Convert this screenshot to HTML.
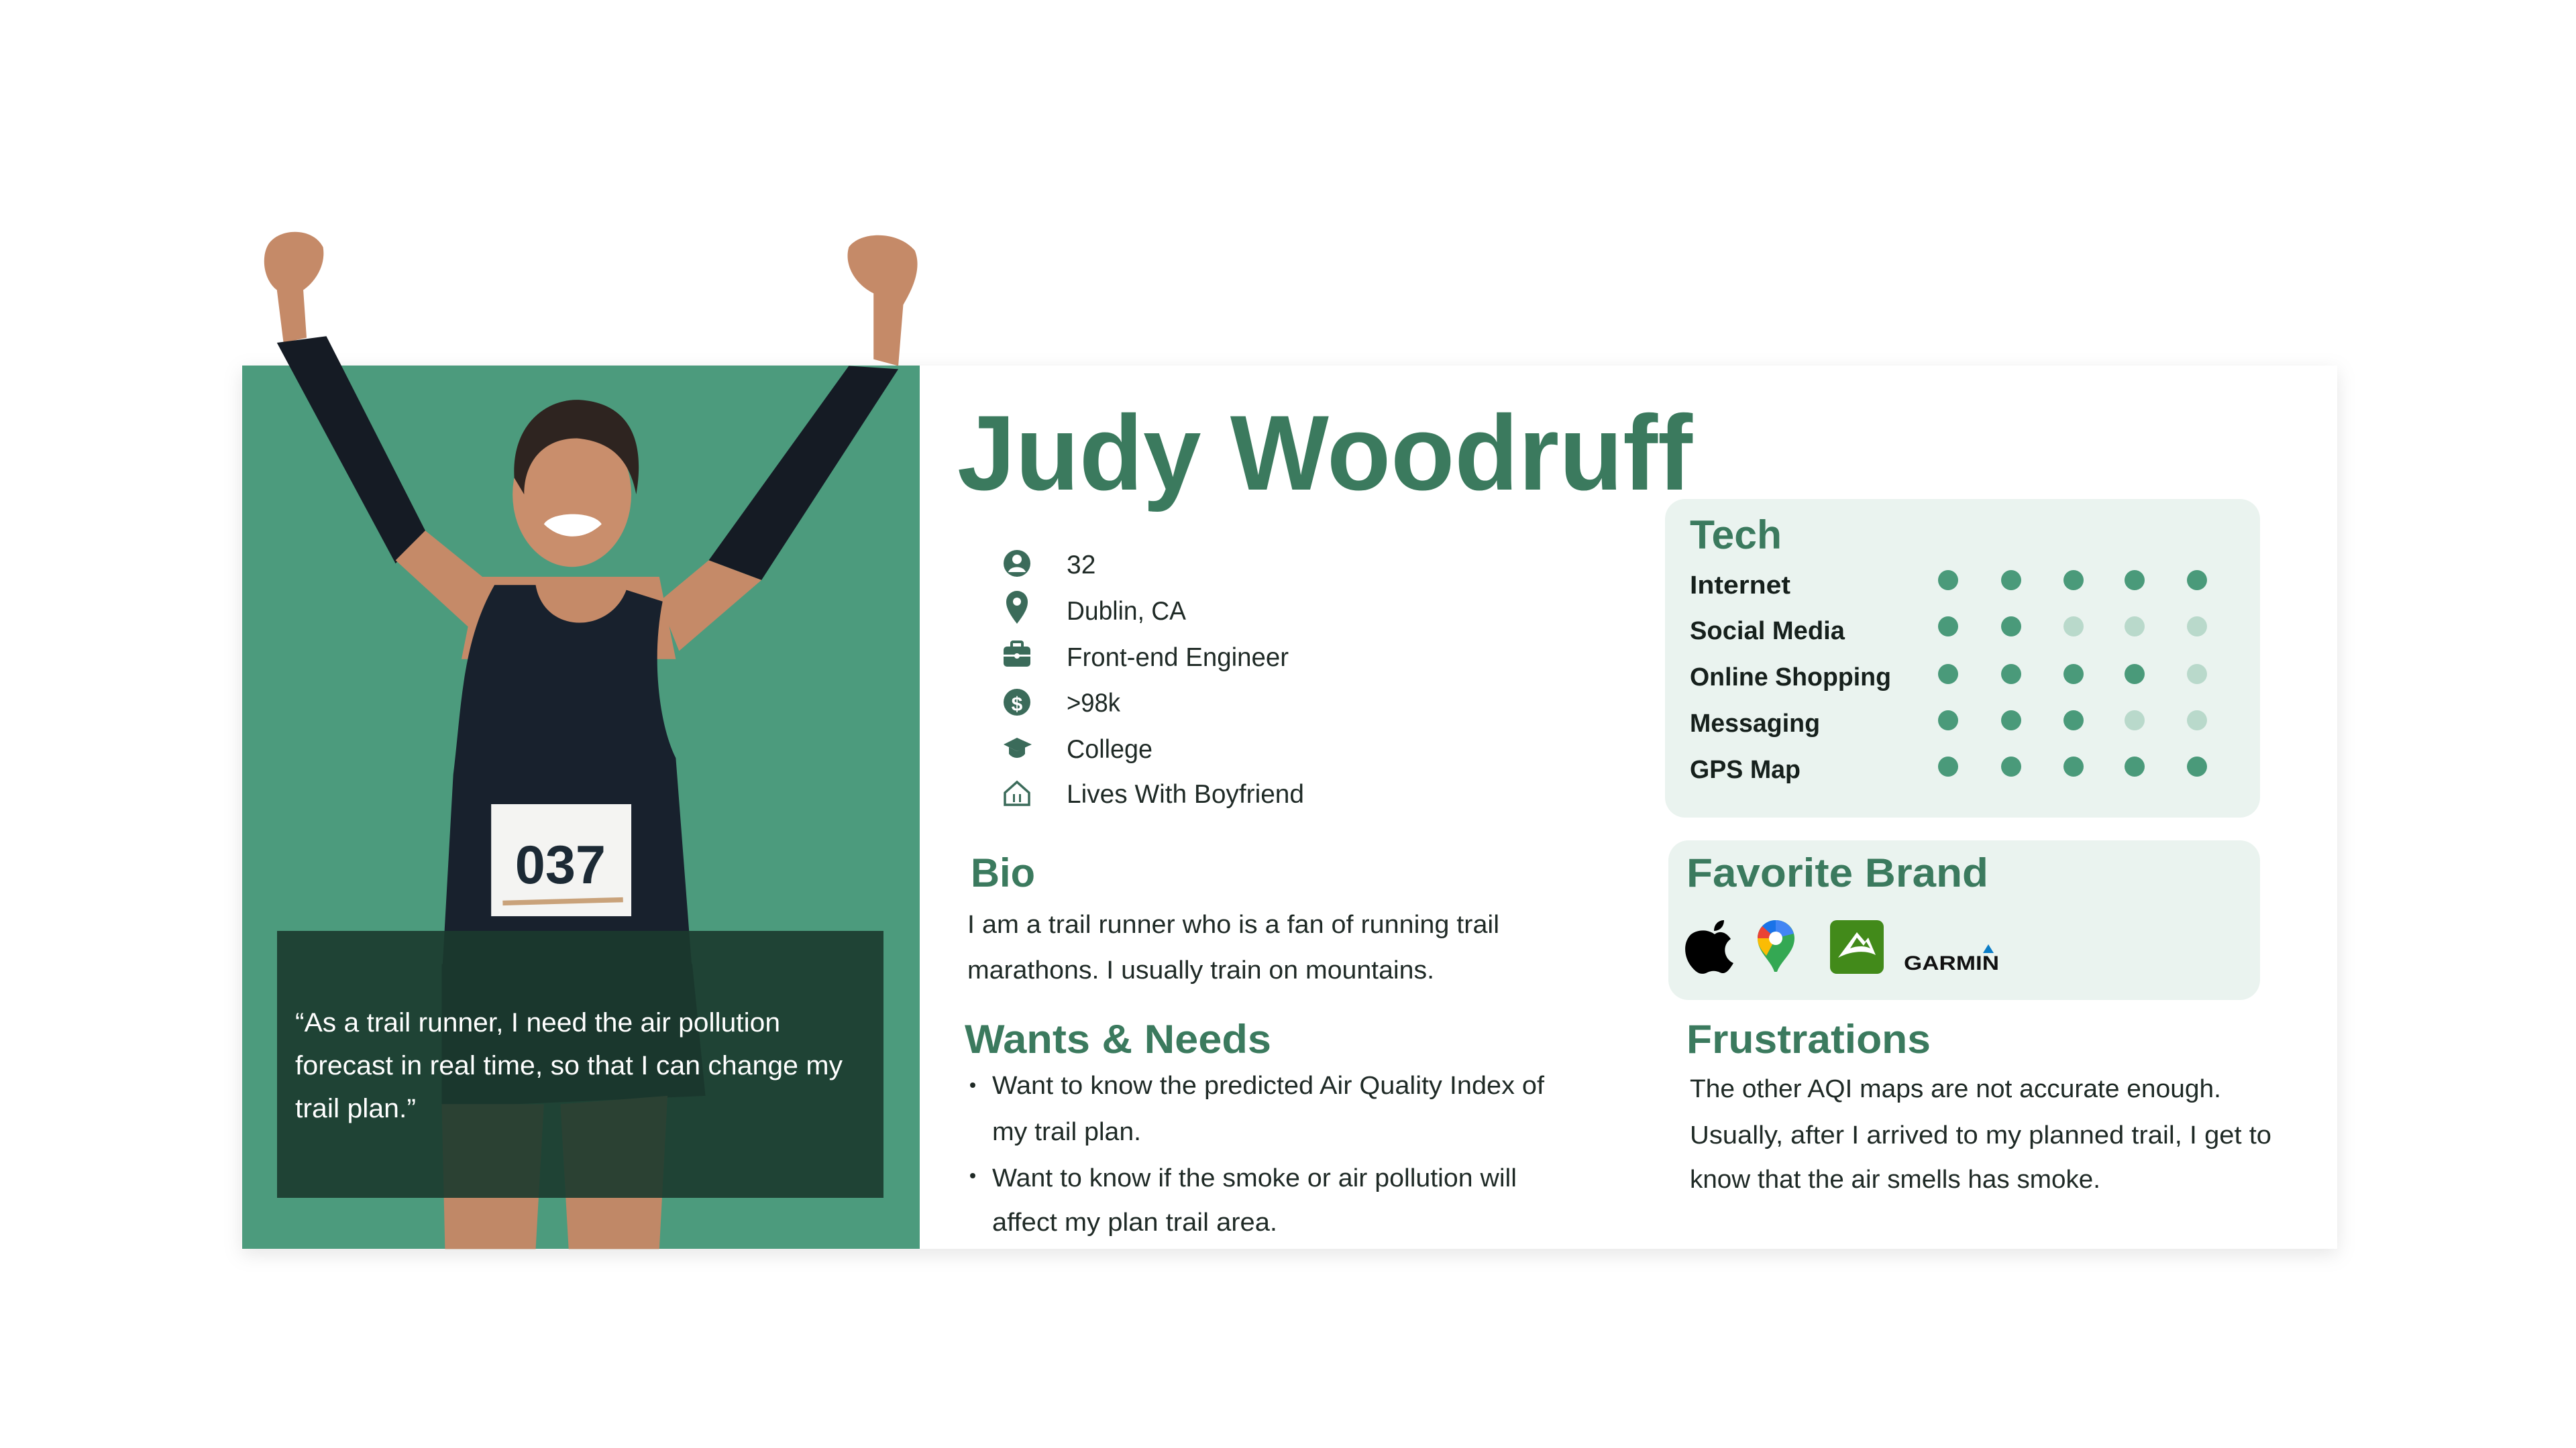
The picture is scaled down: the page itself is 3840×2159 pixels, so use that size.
<!DOCTYPE html>
<html><head><meta charset="utf-8"><style>
html,body{margin:0;padding:0;background:#fff;}
svg{display:block;}
text{font-family:"Liberation Sans",sans-serif;}
</style></head><body>
<svg width="3840" height="2159" viewBox="0 0 3840 2159" xmlns="http://www.w3.org/2000/svg">
<defs>
<filter id="sh" x="-5%" y="-5%" width="110%" height="115%"><feDropShadow dx="0" dy="8" stdDeviation="14" flood-color="#000" flood-opacity="0.10"/></filter>
</defs>
<rect width="3840" height="2159" fill="#fff"/>
<rect x="361" y="545" width="3123" height="1317" fill="#fff" filter="url(#sh)"/>
<rect x="361" y="545" width="1010" height="1317" fill="#4c9b7d"/>

<!-- person, preview coords -->
<g transform="scale(2.457)">
  <!-- left arm -->
  <path d="M163 148 C170 138 190 138 196 150 C198 162 190 172 184 176 L186 205 L172 208 L168 176 C160 170 158 156 163 148Z" fill="#c58a68"/>
  <path d="M168 208 L198 204 L258 322 L240 342 Z" fill="#151b24"/>
  <path d="M240 340 L258 322 L305 360 L300 395 Z" fill="#c58a68"/>
  <!-- right arm -->
  <path d="M515 150 C522 140 545 140 555 152 C560 164 552 178 548 185 L545 222 L530 218 L530 178 C518 172 512 160 515 150Z" fill="#c58a68"/>
  <path d="M515 222 L545 224 L462 352 L430 340 Z" fill="#151b24"/>
  <path d="M430 340 L462 352 L412 395 L400 365 Z" fill="#c58a68"/>
  <!-- neck / shoulders -->
  <path d="M290 350 L400 350 L410 400 L280 400 Z" fill="#c58a68"/>
  <!-- head -->
  <ellipse cx="347" cy="300" rx="36" ry="44" fill="#c98e6c"/>
  <path d="M312 290 C310 255 335 240 355 243 C380 246 392 265 386 300 C382 280 372 268 350 266 C330 266 318 280 318 300Z" fill="#2e2420"/>
  <path d="M330 318 C340 328 355 328 365 318 C360 310 335 310 330 318Z" fill="#fff"/>
  <!-- tank top -->
  <path d="M300 355 L325 355 C330 385 370 385 380 358 L402 365 C395 400 400 440 410 460 L420 590 L268 595 L275 470 C280 430 280 390 300 355Z" fill="#18212d"/>
  <!-- bib -->
  <rect x="298" y="488" width="85" height="68" fill="#f4f4f2"/>
  <text x="340" y="536" text-anchor="middle" font-size="33" font-weight="bold" fill="#1c2a35" font-family="Liberation Sans Narrow, Liberation Sans, sans-serif">037</text>
  <path d="M305 548 L378 546" stroke="#c9a27a" stroke-width="3"/>
  <!-- shorts & legs -->
  <path d="M268 585 L420 585 L428 665 L268 672 Z" fill="#1c2630"/>
  <path d="M268 670 L330 670 L325 758 L270 758 Z" fill="#c08867"/>
  <path d="M340 670 L405 665 L400 758 L345 758 Z" fill="#c08867"/>
</g>

<!-- quote box -->
<rect x="413" y="1388" width="904" height="398" fill="#1b3a2e" fill-opacity="0.9"/>
<g fill="#fff" font-size="40">
<text x="440" y="1538" textLength="723" lengthAdjust="spacingAndGlyphs">“As a trail runner, I need the air pollution</text>
<text x="440" y="1602" textLength="816" lengthAdjust="spacingAndGlyphs">forecast in real time, so that I can change my</text>
<text x="440" y="1666" textLength="180" lengthAdjust="spacingAndGlyphs">trail plan.”</text>
</g>

<!-- name -->
<text x="1427" y="730" font-size="159" font-weight="bold" fill="#3b7a5e" textLength="1096" lengthAdjust="spacingAndGlyphs">Judy Woodruff</text>

<!-- info icons -->
<g fill="#3b6b5a">
  <circle cx="1516" cy="840" r="20"/>
  <circle cx="1516" cy="834" r="7" fill="#fff"/>
  <path d="M1503 853 C1506 843 1526 843 1529 853 Z" fill="#fff"/>
  <path d="M1516 930 C1502 912 1500 904 1500 897 A16 16 0 0 1 1532 897 C1532 904 1530 912 1516 930Z"/>
  <circle cx="1516" cy="897" r="6" fill="#fff"/>
  <rect x="1496" y="964" width="40" height="30" rx="5"/>
  <rect x="1508" y="957" width="16" height="9" rx="2" fill="none" stroke="#3b6b5a" stroke-width="4"/>
  <rect x="1496" y="976" width="40" height="3" fill="#fff"/>
  <circle cx="1516" cy="978" r="4" fill="#fff"/>
  <circle cx="1516" cy="1047" r="20"/>
  <text x="1516" y="1060" text-anchor="middle" font-size="30" font-weight="bold" fill="#fff">$</text>
  <path d="M1496 1110 L1516 1100 L1538 1110 L1516 1120 Z"/>
  <path d="M1504 1114 L1504 1124 C1510 1132 1522 1132 1528 1124 L1528 1114 L1516 1120 Z"/>
  <path d="M1498 1182 L1516 1166 L1534 1182 L1534 1200 L1498 1200 Z" fill="none" stroke="#3b6b5a" stroke-width="3.5"/>
  <rect x="1510" y="1184" width="3" height="12"/><rect x="1519" y="1184" width="3" height="12"/>
</g>
<g font-size="39" fill="#1f2a26">
<text x="1590" y="855">32</text>
<text x="1590" y="924" textLength="178" lengthAdjust="spacingAndGlyphs">Dublin, CA</text>
<text x="1590" y="993" textLength="331" lengthAdjust="spacingAndGlyphs">Front-end Engineer</text>
<text x="1590" y="1061" textLength="80" lengthAdjust="spacingAndGlyphs">&gt;98k</text>
<text x="1590" y="1130" textLength="128" lengthAdjust="spacingAndGlyphs">College</text>
<text x="1590" y="1197" textLength="354" lengthAdjust="spacingAndGlyphs">Lives With Boyfriend</text>
</g>

<!-- Tech -->
<rect x="2482" y="744" width="887" height="475" rx="30" fill="#eaf3ef"/>
<text x="2519" y="818" font-size="60" font-weight="bold" fill="#3b7a5e" textLength="137" lengthAdjust="spacingAndGlyphs">Tech</text>
<g font-size="38" font-weight="bold" fill="#16201c">
<text x="2519" y="885" textLength="150" lengthAdjust="spacingAndGlyphs">Internet</text>
<text x="2519" y="953" textLength="231" lengthAdjust="spacingAndGlyphs">Social Media</text>
<text x="2519" y="1022" textLength="300" lengthAdjust="spacingAndGlyphs">Online Shopping</text>
<text x="2519" y="1091" textLength="194" lengthAdjust="spacingAndGlyphs">Messaging</text>
<text x="2519" y="1160" textLength="165" lengthAdjust="spacingAndGlyphs">GPS Map</text>
</g>
<g fill="#4a9a7a">
<circle cx="2904" cy="865" r="15"/><circle cx="2998" cy="865" r="15"/><circle cx="3091" cy="865" r="15"/><circle cx="3182" cy="865" r="15"/><circle cx="3275" cy="865" r="15"/>
<circle cx="2904" cy="934" r="15"/><circle cx="2998" cy="934" r="15"/>
<circle cx="2904" cy="1005" r="15"/><circle cx="2998" cy="1005" r="15"/><circle cx="3091" cy="1005" r="15"/><circle cx="3182" cy="1005" r="15"/>
<circle cx="2904" cy="1074" r="15"/><circle cx="2998" cy="1074" r="15"/><circle cx="3091" cy="1074" r="15"/>
<circle cx="2904" cy="1143" r="15"/><circle cx="2998" cy="1143" r="15"/><circle cx="3091" cy="1143" r="15"/><circle cx="3182" cy="1143" r="15"/><circle cx="3275" cy="1143" r="15"/>
</g>
<g fill="#b9d9cb">
<circle cx="3091" cy="934" r="15"/><circle cx="3182" cy="934" r="15"/><circle cx="3275" cy="934" r="15"/>
<circle cx="3275" cy="1005" r="15"/>
<circle cx="3182" cy="1074" r="15"/><circle cx="3275" cy="1074" r="15"/>
</g>

<!-- Favorite brand -->
<rect x="2487" y="1253" width="882" height="238" rx="30" fill="#eaf3ef"/>
<text x="2514" y="1322" font-size="60" font-weight="bold" fill="#3b7a5e" textLength="450" lengthAdjust="spacingAndGlyphs">Favorite Brand</text>
<!-- apple -->
<path d="M2556 1393 C2545 1385 2530 1386 2521 1393 C2508 1405 2510 1428 2522 1442 C2530 1452 2537 1454 2545 1450 C2551 1447 2558 1447 2564 1450 C2572 1454 2578 1446 2584 1436 C2570 1430 2566 1410 2580 1400 C2572 1388 2562 1388 2556 1393Z" fill="#000"/>
<path d="M2555 1388 C2555 1378 2562 1372 2570 1372 C2570 1382 2563 1388 2555 1388Z" fill="#000"/>
<!-- maps pin -->
<path d="M2647 1372 C2632 1372 2620 1384 2620 1399 C2620 1420 2640 1432 2645 1449 L2649 1449 C2655 1432 2675 1420 2675 1399 C2675 1384 2663 1372 2647 1372Z" fill="#34a853"/>
<path d="M2620 1399 C2620 1384 2632 1372 2647 1372 L2647 1399 Z" fill="#1a73e8"/>
<path d="M2647 1372 C2660 1372 2670 1380 2674 1392 L2647 1399 Z" fill="#4285f4"/>
<path d="M2620 1399 L2647 1399 L2633 1425 C2625 1416 2620 1409 2620 1399Z" fill="#fbbc04"/>
<path d="M2620 1399 C2620 1390 2624 1384 2627 1381 L2647 1399 Z" fill="#ea4335"/>
<circle cx="2647" cy="1399" r="10" fill="#fff"/>
<!-- alltrails -->
<rect x="2728" y="1372" width="80" height="80" rx="10" fill="#428a1a"/>
<path d="M2740 1428 L2768 1390 L2780 1404 L2785 1398 L2796 1424 C2782 1416 2758 1418 2740 1428Z M2758 1414 C2768 1410 2780 1410 2788 1414 L2782 1404 L2778 1410 L2768 1398Z" fill="#fff" fill-rule="evenodd"/>
<!-- garmin -->
<text x="2838" y="1446" font-size="30" font-weight="bold" fill="#111" textLength="142" lengthAdjust="spacingAndGlyphs">GARMIN</text>
<path d="M2964 1408 L2972 1421 L2956 1421Z" fill="#0a7cc6"/>

<!-- Bio -->
<text x="1447" y="1322" font-size="60" font-weight="bold" fill="#3b7a5e" textLength="96" lengthAdjust="spacingAndGlyphs">Bio</text>
<g font-size="38" fill="#1f2a26">
<text x="1442" y="1391" textLength="793" lengthAdjust="spacingAndGlyphs">I am a trail runner who is a fan of running trail</text>
<text x="1442" y="1459" textLength="696" lengthAdjust="spacingAndGlyphs">marathons. I usually train on mountains.</text>
</g>
<text x="1438" y="1570" font-size="60" font-weight="bold" fill="#3b7a5e" textLength="457" lengthAdjust="spacingAndGlyphs">Wants &amp; Needs</text>
<g font-size="38" fill="#1f2a26">
<circle cx="1450" cy="1618" r="4"/><circle cx="1450" cy="1753" r="4"/>
<text x="1479" y="1631" textLength="823" lengthAdjust="spacingAndGlyphs">Want to know the predicted Air Quality Index of</text>
<text x="1479" y="1700" textLength="222" lengthAdjust="spacingAndGlyphs">my trail plan.</text>
<text x="1479" y="1769" textLength="782" lengthAdjust="spacingAndGlyphs">Want to know if the smoke or air pollution will</text>
<text x="1479" y="1835" textLength="425" lengthAdjust="spacingAndGlyphs">affect my plan trail area.</text>
</g>
<text x="2514" y="1570" font-size="60" font-weight="bold" fill="#3b7a5e" textLength="364" lengthAdjust="spacingAndGlyphs">Frustrations</text>
<g font-size="38" fill="#1f2a26">
<text x="2519" y="1636" textLength="792" lengthAdjust="spacingAndGlyphs">The other AQI maps are not accurate enough.</text>
<text x="2519" y="1705" textLength="867" lengthAdjust="spacingAndGlyphs">Usually, after I arrived to my planned trail, I get to</text>
<text x="2519" y="1771" textLength="612" lengthAdjust="spacingAndGlyphs">know that the air smells has smoke.</text>
</g>
</svg>
</body></html>
